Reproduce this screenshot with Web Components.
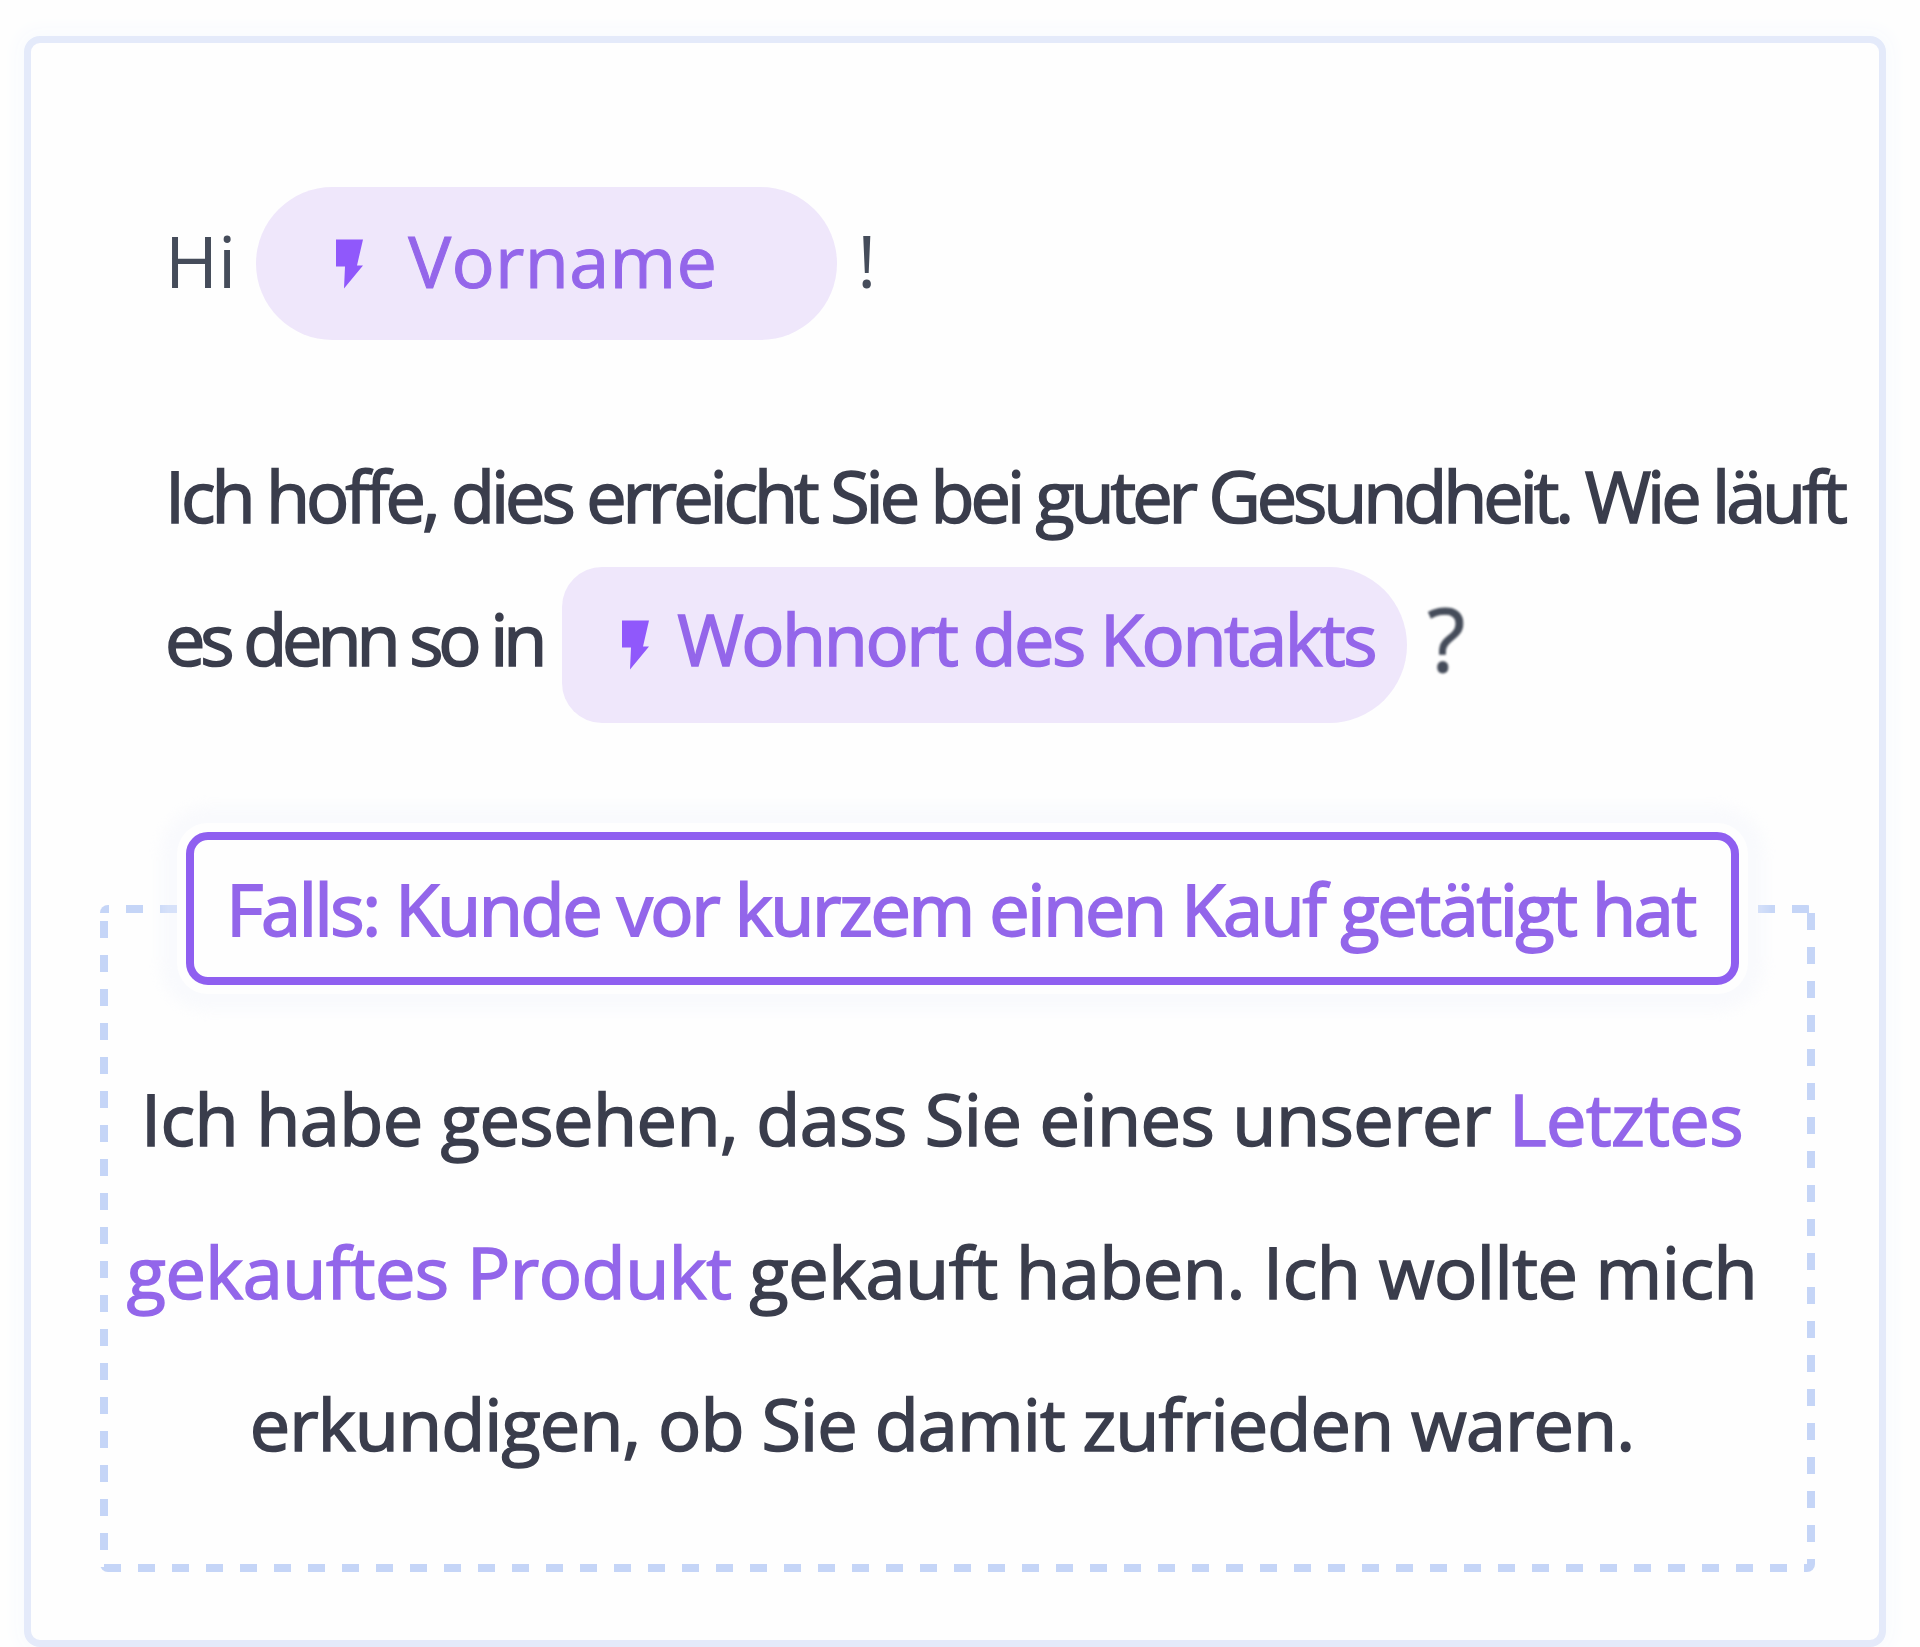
<!DOCTYPE html>
<html lang="de">
<head>
<meta charset="utf-8">
<title>Vorlage</title>
<style>
    html, body { margin: 0; height: 100%; background: #fefefe; overflow: hidden; }
</style>
</head>
<body>
<mail-card>
    <mail-row style="--lift:7px">
        <mail-line tone="soft">Hi</mail-line>
        <merge-chip style="--chip-w:581px;--chip-h:153px;--chip-pad:80px;--bolt-gap:45px;--chip-radius:77px;--chip-stroke:1px;--chip-spacing:.3px">Vorname</merge-chip>
        <mail-line tone="soft">!</mail-line>
    </mail-row>
    <mail-line spacing="-4.1" style="margin-top:105px">Ich hoffe, dies erreicht Sie bei guter Gesundheit. Wie läuft</mail-line>
    <mail-row style="margin-top:22px;--lift:14px">
        <mail-line spacing="-5.1">es denn so in</mail-line>
        <merge-chip style="--chip-w:845px;--chip-h:156px;--chip-pad:60px;--bolt-gap:28px;--chip-radius:40px 78px 78px 40px;--chip-stroke:1.5px;--chip-spacing:-2.5px">Wohnort des Kontakts</merge-chip>
        <mail-line tone="soft" style="font-size:88px;filter:blur(.8px);-webkit-text-stroke:1px">?</mail-line>
    </mail-row>
    <cond-block label="Falls: Kunde vor kurzem einen Kauf getätigt hat" spacing="-2.35">
        <mail-line spacing="-.55">Ich habe gesehen, dass Sie eines unserer <merge-word>Letztes</merge-word></mail-line>
        <mail-line spacing="-.47"><merge-word>gekauftes Produkt</merge-word> gekauft haben. Ich wollte mich</mail-line>
        <mail-line spacing="-.9">erkundigen, ob Sie damit zufrieden waren.</mail-line>
    </cond-block>
</mail-card>

<script>
class MailCard extends HTMLElement {
    constructor() {
        super();
        this.attachShadow({ mode: "open" });
        this.shadowRoot.innerHTML = `
            <style>
                :host {
                    display: block;
                    padding: 36px 34px 0 24px;
                    font-family: "Open Sans", "Noto Sans", sans-serif;
                    font-size: 72px;
                    line-height: 100px;
                    color: #3a3d4c;
                    filter: blur(.5px);
                }
                .card {
                    box-sizing: border-box;
                    height: 1611px;
                    border: 7px solid #e4eafa;
                    border-radius: 16px;
                    background: #fefefe;
                    box-shadow: 0 0 18px 8px #f9fbfe;
                    padding: 144px 0 0 134px;
                    display: flex;
                    flex-direction: column;
                    align-items: flex-start;
                }
            </style>
            <div class="card"><slot></slot></div>
        `;
    }
}

class MailRow extends HTMLElement {
    constructor() {
        super();
        this.attachShadow({ mode: "open" });
        this.shadowRoot.innerHTML = `
            <style>
                :host { display: flex; align-items: center; gap: 20px; }
            </style>
            <slot></slot>
        `;
    }
}

// only 400 and 600 of Open Sans are installed, the stroke gives the medium weight
class MailLine extends HTMLElement {
    constructor() {
        super();
        this.attachShadow({ mode: "open" });
        const soft = this.getAttribute("tone") === "soft";
        const spacing = this.getAttribute("spacing") || "0";
        this.shadowRoot.innerHTML = `
            <style>
                :host {
                    display: block;
                    width: max-content;
                    padding-bottom: var(--lift, 0);
                    white-space: nowrap;
                    font-weight: 400;
                    -webkit-text-stroke: ${soft ? "0" : "1.6px"};
                    color: ${soft ? "#454c5a" : "inherit"};
                    letter-spacing: ${spacing}px;
                }
            </style>
            <slot></slot>
        `;
    }
}

class MergeWord extends HTMLElement {
    constructor() {
        super();
        this.attachShadow({ mode: "open" });
        this.shadowRoot.innerHTML = `
            <style>
                :host { display: inline; color: #9366ea; }
            </style>
            <slot></slot>
        `;
    }
}

class MergeChip extends HTMLElement {
    constructor() {
        super();
        this.attachShadow({ mode: "open" });
        this.shadowRoot.innerHTML = `
            <style>
                :host {
                    display: flex;
                    align-items: center;
                    box-sizing: border-box;
                    width: var(--chip-w);
                    height: var(--chip-h);
                    padding-left: var(--chip-pad);
                    gap: var(--bolt-gap);
                    border-radius: var(--chip-radius);
                    background: #efe7fb;
                    color: #9466ea;
                    font-weight: 400;
                    -webkit-text-stroke: var(--chip-stroke);
                    letter-spacing: var(--chip-spacing);
                    white-space: nowrap;
                }
                svg { flex: none; width: 27px; height: 50px; }
                span { padding-bottom: var(--lift, 0); }
            </style>
            <svg viewBox="0 0 27 49"><path fill="#9058fb" d="M0 0H27L21 26H27L8 49L9 27H0Z"/></svg>
            <span><slot></slot></span>
        `;
    }
}

class CondBlock extends HTMLElement {
    constructor() {
        super();
        this.attachShadow({ mode: "open" });
        const label = this.getAttribute("label");
        const spacing = this.getAttribute("spacing") || "0";
        this.shadowRoot.innerHTML = `
            <style>
                :host {
                    display: flex;
                    flex-direction: column;
                    box-sizing: border-box;
                    width: 1715px;
                    margin: 182px 0 0 -65px;
                    padding: 0 31px 72px 0;
                    line-height: 152.5px;
                    border-radius: 8px;
                    background-image:
                        repeating-linear-gradient(90deg, #c5d5f7 0 17px, transparent 17px 34px),
                        repeating-linear-gradient(90deg, #c5d5f7 0 17px, transparent 17px 34px),
                        repeating-linear-gradient(180deg, #c5d5f7 0 17px, transparent 17px 34px),
                        repeating-linear-gradient(180deg, #c5d5f7 0 17px, transparent 17px 34px);
                    background-size: 34px 8px, 34px 8px, 8px 34px, 8px 34px;
                    background-repeat: repeat-x, repeat-x, repeat-y, repeat-y;
                    background-position: 26px 0, 4px 100%, 0 16px, 100% 8px;
                }
                .label {
                    box-sizing: border-box;
                    align-self: flex-start;
                    width: 1553px;
                    height: 153px;
                    margin: -73px 0 57px 86px;
                    padding-right: 4px;
                    border: 8px solid #8f5ff0;
                    border-radius: 22px;
                    background: #fefefe;
                    box-shadow: 0 0 0 9px #fefefe, 0 0 14px 26px rgba(243,246,253,.4);
                    color: #9366ea;
                    font-weight: 400;
                    -webkit-text-stroke: 1.8px;
                    letter-spacing: ${spacing}px;
                    line-height: 137px;
                    text-align: center;
                    white-space: nowrap;
                }
                .lines { display: flex; flex-direction: column; align-items: center; }
            </style>
            <div class="label">${label}</div>
            <div class="lines"><slot></slot></div>
        `;
    }
}

customElements.define("mail-card", MailCard);
customElements.define("mail-row", MailRow);
customElements.define("mail-line", MailLine);
customElements.define("merge-word", MergeWord);
customElements.define("merge-chip", MergeChip);
customElements.define("cond-block", CondBlock);
</script>
</body>
</html>
